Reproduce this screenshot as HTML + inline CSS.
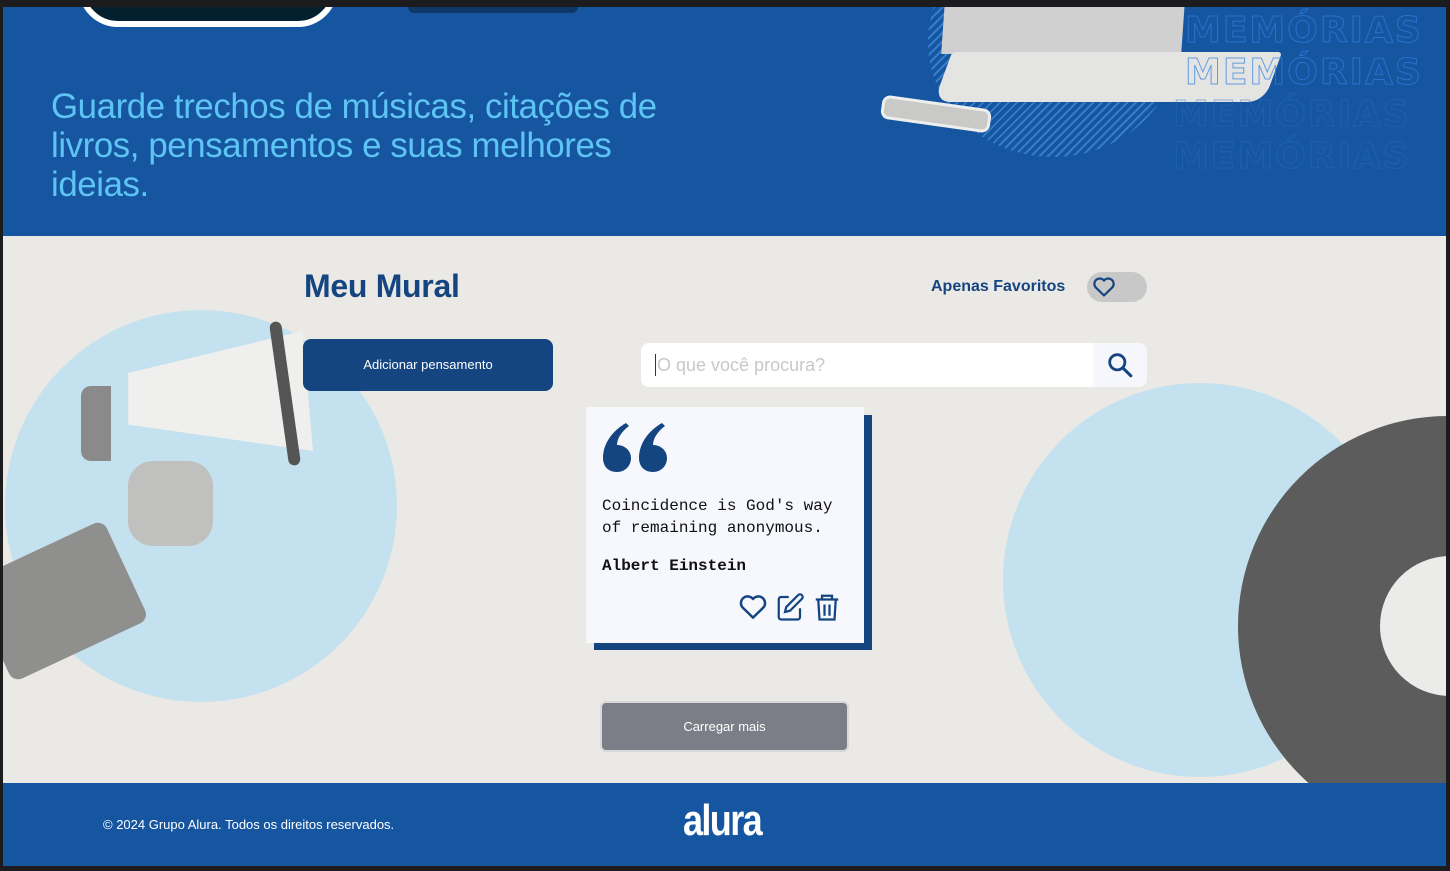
<!DOCTYPE html>
<html><head><meta charset="utf-8"><style>
*{margin:0;padding:0;box-sizing:border-box}
body{width:1450px;height:871px;background:#1c1c1e;position:relative;overflow:hidden;font-family:"Liberation Sans",sans-serif}
.hdr{position:absolute;left:3px;top:7px;width:1443px;height:229px;background:#1656a0;overflow:hidden}
.main{position:absolute;left:3px;top:236px;width:1443px;height:547px;background:#ebe9e5;overflow:hidden}
.ftr{position:absolute;left:3px;top:783px;width:1443px;height:83px;background:#1656a0}
.abs{position:absolute}
</style></head><body>
<div class="hdr">
  <div class="abs" style="left:75px;top:-40px;width:260px;height:60px;background:#04202f;border:6px solid #fff;border-radius:0 0 40px 40px"></div>
  <div class="abs" style="left:405px;top:-10px;width:170px;height:16px;background:#0d2c4f;border-radius:6px;opacity:.7"></div>
  <div class="abs" style="left:48px;top:80px;font-size:34.8px;line-height:39px;color:#5ec4f4;width:650px;letter-spacing:-0.4px">Guarde trechos de músicas, citações de livros, pensamentos e suas melhores ideias.</div>
  <div class="abs" style="left:925px;top:-80px;width:250px;height:230px;border-radius:50%;background:repeating-linear-gradient(135deg,#3d86d6 0 2px,transparent 2px 6px);opacity:.8"></div>
  <div class="abs" style="left:940px;top:-5px;width:240px;height:52px;background:#d0d0d0;transform:skewX(-4deg)"></div>
  <div class="abs" style="left:940px;top:45px;width:330px;height:50px;background:#e4e4e2;border-radius:4px 4px 16px 16px;transform:skewX(-20deg)"></div>
  <div class="abs" style="left:878px;top:95px;width:110px;height:24px;background:#c9c9c7;border:3px solid #eee;border-radius:8px;transform:rotate(8deg)"></div>
  <div class="abs" style="left:1182px;top:3px;font:bold 36px/42px 'DejaVu Sans',sans-serif;letter-spacing:2px;color:transparent;-webkit-text-stroke:1px #2f7ee0;opacity:.7">MEMÓRIAS<br>MEMÓRIAS</div>
  <div class="abs" style="left:1170px;top:87px;font:bold 36px/42px 'DejaVu Sans',sans-serif;letter-spacing:2px;color:transparent;-webkit-text-stroke:1px #2a6cc0;opacity:.45">MEMÓRIAS<br>MEMÓRIAS</div>
</div>
<div class="main">
  <div class="abs" style="left:2px;top:74px;width:392px;height:392px;border-radius:50%;background:#bcdff0;opacity:.85"></div>
  <div class="abs" style="left:100px;top:95px;width:210px;height:120px;background:#efefed;clip-path:polygon(12% 35%,95% 0,100% 100%,12% 78%);"></div>
  <div class="abs" style="left:78px;top:150px;width:30px;height:75px;background:#8a8a8a;border-radius:10px 0 0 10px"></div>
  <div class="abs" style="left:276px;top:85px;width:12px;height:145px;background:#555;border-radius:6px;transform:rotate(-8deg)"></div>
  <div class="abs" style="left:125px;top:225px;width:85px;height:85px;background:#c0c0be;border-radius:25px"></div>
  <div class="abs" style="left:-20px;top:310px;width:150px;height:110px;background:#8f8f8d;transform:rotate(-25deg);border-radius:10px"></div>
  <div class="abs" style="left:1000px;top:147px;width:394px;height:394px;border-radius:50%;background:#bcdff0;opacity:.85"></div>
  <div class="abs" style="left:1235px;top:180px;width:420px;height:420px;border-radius:50%;background:#5c5c5c"></div>
  <div class="abs" style="left:1377px;top:320px;width:140px;height:140px;border-radius:50%;background:#ebebea"></div>
  <div class="abs" style="left:301px;top:32px;font-size:32px;font-weight:bold;color:#154580;letter-spacing:-0.3px">Meu Mural</div>
  <div class="abs" style="left:300px;top:103px;width:250px;height:52px;background:#154580;border-radius:8px;color:#fff;font-size:13px;text-align:center;line-height:52px">Adicionar pensamento</div>
  <div class="abs" style="left:928px;top:42px;font-size:16px;font-weight:bold;color:#154580">Apenas Favoritos</div>
  <div class="abs" style="left:1084px;top:36px;width:60px;height:30px;background:#c8c8c8;border-radius:15px"></div>
  <svg class="abs" style="left:1088px;top:39px" width="26" height="24" viewBox="0 0 24 24"><path d="M12 20.5 3.5 12.2A5 5 0 0 1 12 5.6a5 5 0 0 1 8.5 6.6Z" fill="none" stroke="#154580" stroke-width="2.2" stroke-linejoin="round"/></svg>
  <div class="abs" style="left:638px;top:107px;width:506px;height:44px;background:#fff;border-radius:8px;overflow:hidden">
    <div class="abs" style="left:452px;top:0;width:54px;height:44px;background:#f5f7fd"></div>
    <div class="abs" style="left:14px;top:11px;width:1px;height:22px;background:#333"></div>
    <div class="abs" style="left:16px;top:12px;font-size:18px;color:#c8c8cc">O que você procura?</div>
  </div>
  <svg class="abs" style="left:1104px;top:116px" width="26" height="26" viewBox="0 0 24 24"><circle cx="9.5" cy="9.5" r="7" fill="none" stroke="#154580" stroke-width="2.6"/><path d="M14.8 14.8 22 22" stroke="#154580" stroke-width="2.8" stroke-linecap="round"/></svg>
  <div class="abs" style="left:591px;top:179px;width:278px;height:235px;background:#154580"></div>
  <div class="abs" style="left:583px;top:171px;width:278px;height:236px;background:#f6f8fe"></div>
  <svg class="abs" style="left:599px;top:186px" width="70" height="52" viewBox="0 0 70 52">
    <path d="M15 50C6 50 1 44 1 36C1 22 10 9 24 1L27 4C19 10 15 17 15 23C22 23 29 28 29 36C29 44 23 50 15 50Z" fill="#154580"/>
    <path d="M51 50C42 50 37 44 37 36C37 22 46 9 60 1L63 4C55 10 51 17 51 23C58 23 65 28 65 36C65 44 59 50 51 50Z" fill="#154580"/>
  </svg>
  <div class="abs" style="left:599px;top:259px;font:16px/22px 'Liberation Mono',monospace;color:#111">Coincidence is God's way<br>of remaining anonymous.</div>
  <div class="abs" style="left:599px;top:319px;font:bold 16px/22px 'Liberation Mono',monospace;color:#111">Albert Einstein</div>
  <svg class="abs" style="left:735px;top:356px" width="30" height="30" viewBox="0 0 24 24"><path d="M12 20.5 3.5 12.2A5 5 0 0 1 12 5.6a5 5 0 0 1 8.5 6.6Z" fill="none" stroke="#154580" stroke-width="2" stroke-linejoin="round"/></svg>
  <svg class="abs" style="left:772px;top:356px" width="30" height="30" viewBox="0 0 24 24"><path d="M11 4H5a2 2 0 0 0-2 2v14a2 2 0 0 0 2 2h13a2 2 0 0 0 2-2v-7" fill="none" stroke="#154580" stroke-width="1.8"/><path d="M18.5 2.5a2.1 2.1 0 0 1 3 3L12 15l-4 1 1-4z" fill="none" stroke="#154580" stroke-width="1.8"/></svg>
  <svg class="abs" style="left:809px;top:356px" width="30" height="30" viewBox="0 0 24 24"><path d="M3 6h18M8 6V3h8v3M5 6l1 16h12l1-16M10 10v9M14 10v9" fill="none" stroke="#154580" stroke-width="1.8"/></svg>
  <div class="abs" style="left:597px;top:465px;width:249px;height:51px;background:#7b7e86;border:2px solid #d8d8dc;border-radius:6px;color:#fff;font-size:13px;text-align:center;line-height:47px">Carregar mais</div>
</div>
<div class="ftr">
  <div class="abs" style="left:100px;top:34px;font-size:13px;color:#fff">© 2024 Grupo Alura. Todos os direitos reservados.</div>
  <div class="abs" style="left:680px;top:16px;font:bold 44px/1 'Liberation Sans',sans-serif;color:#fff;letter-spacing:-2px;transform:scaleX(0.82);transform-origin:left">alura</div>
</div>
</body></html>
